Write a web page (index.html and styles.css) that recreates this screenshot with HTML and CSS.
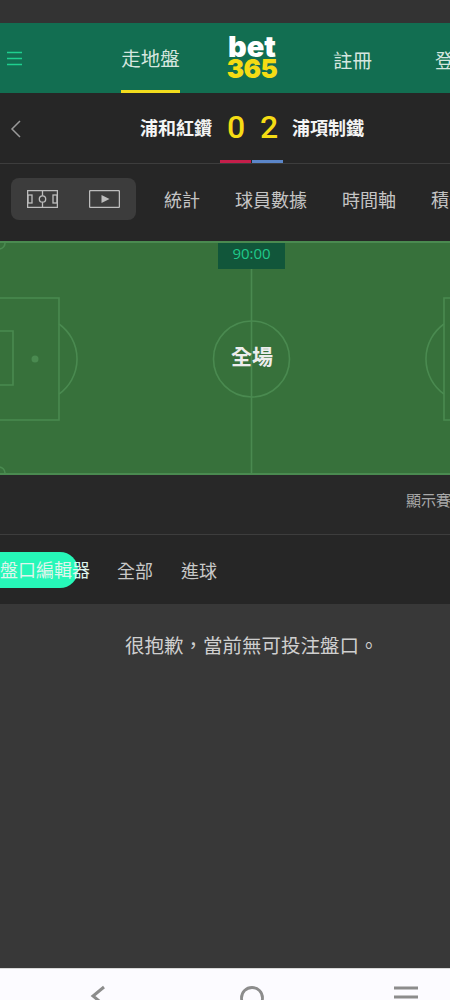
FILE: index.html
```html
<!DOCTYPE html>
<html lang="zh-Hant">

<head>
    <meta charset="UTF-8">
    <meta name="viewport" content="width=device-width, initial-scale=1.0">
    <title>bet365</title>
    <link rel="stylesheet" href="styles.css">
</head>

<body>
    <div class="page">
        <div class="status-bar"></div>

        <header class="site-header">
            <svg class="menu-icon" width="15" height="15" viewBox="0 0 15 15">
                <path d="M0 1.5h15M0 7.5h15M0 13.5h15" stroke="#1fd08f" stroke-width="1.4" fill="none" />
            </svg>
            <a class="header-link active">走地盤</a>
            <div class="logo">
                <span class="logo-top">bet</span>
                <span class="logo-bottom">365</span>
            </div>
            <a class="header-link signup">註冊</a>
            <a class="header-link login">登入</a>
        </header>

        <section class="score-row">
            <svg class="back-icon" width="11" height="18" viewBox="0 0 11 18">
                <path d="M10 1L2 9l8 8" stroke="#9a9a9a" stroke-width="1.5" fill="none" />
            </svg>
            <span class="team home">浦和紅鑽</span>
            <span class="score">0</span>
            <span class="score">2</span>
            <span class="team away">浦項制鐵</span>
            <div class="team-colors">
                <span class="color-home"></span>
                <span class="color-away"></span>
            </div>
        </section>

        <nav class="stat-tabs">
            <div class="view-toggle">
                <svg width="31" height="18" viewBox="0 0 31 18">
                    <g stroke="#bdbdbd" stroke-width="1.3" fill="none">
                        <rect x="0.6" y="0.6" width="29.8" height="16.8" />
                        <path d="M15.5 1v16" />
                        <circle cx="15.5" cy="9" r="3.2" fill="#3c3c3c" />
                        <rect x="1" y="5" width="4" height="8" />
                        <rect x="26" y="5" width="4" height="8" />
                    </g>
                </svg>
                <svg width="31" height="18" viewBox="0 0 31 18">
                    <rect x="0.6" y="0.6" width="29.8" height="16.8" rx="1" stroke="#bdbdbd" stroke-width="1.3" fill="none" />
                    <path d="M12.5 5l8 4-8 4z" fill="#bdbdbd" />
                </svg>
            </div>
            <a class="stat-tab">統計</a>
            <a class="stat-tab">球員數據</a>
            <a class="stat-tab">時間軸</a>
            <a class="stat-tab">積分榜</a>
        </nav>

        <section class="pitch">
            <svg class="pitch-lines" width="450" height="230" viewBox="0 0 450 230">
                <g stroke="#4a8a50" stroke-width="1.6" fill="none">
                    <path d="M251.500 0v230" />
                    <circle cx="251.500" cy="116" r="38" />
                    <path d="M-2 55h61v122h-61" />
                    <path d="M-2 88h15v54h-15" />
                    <path d="M59 81a43 43 0 0 1 0 70" />
                    <path d="M452 55h-8v122h8" />
                    <path d="M444 81a43 43 0 0 0 0 70" />
                    <path d="M5 0a6 6 0 0 1-6 6" />
                    <path d="M-1 224a6 6 0 0 1 6 6" />
                </g>
                <circle cx="35" cy="116" r="3.500" fill="#4a8a50" />
            </svg>
            <div class="clock">90:00</div>
            <div class="period">全場</div>
        </section>

        <section class="info-row">
            <span class="info-text">顯示賽事資訊</span>
        </section>

        <nav class="chips">
            <a class="chip-editor">盤口編輯器</a>
            <a class="chip">全部</a>
            <a class="chip">進球</a>
        </nav>

        <main class="content">
            <p class="empty-msg">很抱歉，當前無可投注盤口。</p>
        </main>

        <footer class="nav-bar">
            <svg width="21" height="32" viewBox="0 0 21 32">
                <path d="M14 18l-11 9 11 9" stroke="#8c8c8c" stroke-width="3" fill="none" />
            </svg>
            <svg width="26" height="32" viewBox="0 0 26 32">
                <circle cx="13" cy="29" r="10.500" stroke="#8c8c8c" stroke-width="2.800" fill="none" />
            </svg>
            <svg width="26" height="32" viewBox="0 0 26 32">
                <path d="M1 19h24M1 28h24" stroke="#8c8c8c" stroke-width="3" fill="none" />
            </svg>
        </footer>
    </div>
</body>

</html>
```

FILE: styles.css
```css
* {
    box-sizing: border-box;
}

body {
    margin: 0;
    background-color: #383838;
    font-family: 'Noto Sans CJK TC', 'Noto Sans', sans-serif;
    overflow: hidden;
}

.page {
    display: flex;
    flex-direction: column;
    width: 450px;
    height: 1000px;
    overflow: hidden;
}

.status-bar {
    height: 23px;
    flex: none;
    background-color: #333333;
}

/* header */
.site-header {
    display: flex;
    align-items: center;
    height: 70px;
    flex: none;
    padding-left: 7px;
    background-color: #126e51;
    white-space: nowrap;
}

.menu-icon {
    flex: none;
}

.header-link {
    display: flex;
    align-items: center;
    height: 70px;
    flex: none;
    padding-top: 2px;
    font-size: 19.500px;
    color: #d5e6df;
}

.header-link.active {
    width: 59px;
    margin-left: 99px;
    justify-content: center;
    border-bottom: 3px solid #f2dc1d;
}

.logo {
    display: flex;
    flex-direction: column;
    align-items: center;
    flex: none;
    width: 50px;
    margin-left: 47px;
    font-family: 'Inter', 'Liberation Sans', sans-serif;
    font-weight: 900;
    font-size: 26px;
    line-height: 22px;
}

.logo-top {
    color: #ffffff;
    font-size: 29px;
}

.logo-bottom {
    color: #f5dc14;
    letter-spacing: -0.5px;
}

.header-link.signup {
    margin-left: 56px;
}

.header-link.login {
    margin-left: 63px;
}

/* score */
.score-row {
    position: relative;
    display: flex;
    align-items: center;
    height: 71px;
    flex: none;
    padding-bottom: 3px;
    background-color: #262626;
    border-bottom: 1px solid #3d3d3d;
}

.back-icon {
    flex: none;
    margin-left: 10px;
    margin-top: 4px;
}

.team {
    flex: none;
    font-size: 18px;
    font-weight: 700;
    color: #f4f4f4;
}

.team.home {
    margin-left: 119px;
    margin-right: 15px;
}

.team.away {
    margin-left: 15px;
}

.score {
    width: 17px;
    margin-right: 16px;
    flex: none;
    font-family: 'Roboto', 'Liberation Sans', sans-serif;
    font-size: 32px;
    font-weight: 500;
    text-align: center;
    color: #f5dc14;
}

.score:nth-of-type(3) {
    margin-right: 0;
}

.team-colors {
    position: absolute;
    left: 220px;
    bottom: 0;
    display: flex;
    gap: 1px;
}

.team-colors span {
    width: 31px;
    height: 3px;
}

.color-home {
    background-color: #c41e4a;
}

.color-away {
    background-color: #5b86c9;
}

/* stats tabs */
.stat-tabs {
    display: flex;
    align-items: center;
    height: 77px;
    flex: none;
    padding-left: 11px;
    padding-bottom: 7px;
    background-color: #262626;
    white-space: nowrap;
}

.view-toggle {
    display: flex;
    align-items: center;
    justify-content: space-between;
    width: 125px;
    height: 42px;
    flex: none;
    margin-right: 28px;
    padding: 0 16px;
    background-color: #3c3c3c;
    border-radius: 8px;
}

.stat-tab {
    flex: none;
    margin-right: 35px;
    font-size: 18px;
    color: #c4c4c4;
}

/* pitch */
.pitch {
    position: relative;
    height: 234px;
    flex: none;
    background-color: #37713b;
    border-top: 2px solid #4a8a50;
    border-bottom: 2px solid #4a8a50;
}

.pitch-lines {
    display: block;
}

.clock {
    position: absolute;
    top: 0;
    left: 218px;
    width: 67px;
    height: 26px;
    background-color: #11563a;
    color: #1fc98a;
    font-family: 'Open Sans', 'Noto Sans', sans-serif;
    font-size: 15px;
    line-height: 21px;
    text-align: center;
}

.period {
    position: absolute;
    top: 97px;
    left: 231px;
    font-size: 21px;
    line-height: 30px;
    font-weight: 700;
    color: #ededed;
}

.info-row {
    display: flex;
    align-items: center;
    height: 60px;
    flex: none;
    padding-left: 406px;
    padding-bottom: 11px;
    background-color: #282828;
    border-bottom: 1px solid #3d3d3d;
    white-space: nowrap;
}

.info-text {
    font-size: 15px;
    color: #a8a8a8;
}

/* chips */
.chips {
    display: flex;
    align-items: center;
    height: 69px;
    flex: none;
    background-color: #262626;
    white-space: nowrap;
}

.chip-editor {
    display: block;
    width: 96px;
    height: 36px;
    flex: none;
    margin-left: -18px;
    margin-right: 39px;
    padding-left: 18px;
    background-color: #26f7b8;
    border-radius: 18px;
    font-size: 18px;
    line-height: 34px;
    color: #dff5ec;
}

.chip {
    flex: none;
    margin-right: 28px;
    font-size: 18px;
    color: #c8c8c8;
}

/* content */
.content {
    flex: 1;
    background-color: #383838;
}

.empty-msg {
    margin: 27px 0 0 125px;
    font-size: 19.500px;
    line-height: 28px;
    color: #cfcfcf;
}

/* android nav */
.nav-bar {
    display: flex;
    align-items: flex-start;
    height: 32px;
    flex: none;
    padding-left: 90px;
    gap: 128px;
    background-color: #fcfbff;
    border-top: 1px solid #d8d8d8;
}
```
